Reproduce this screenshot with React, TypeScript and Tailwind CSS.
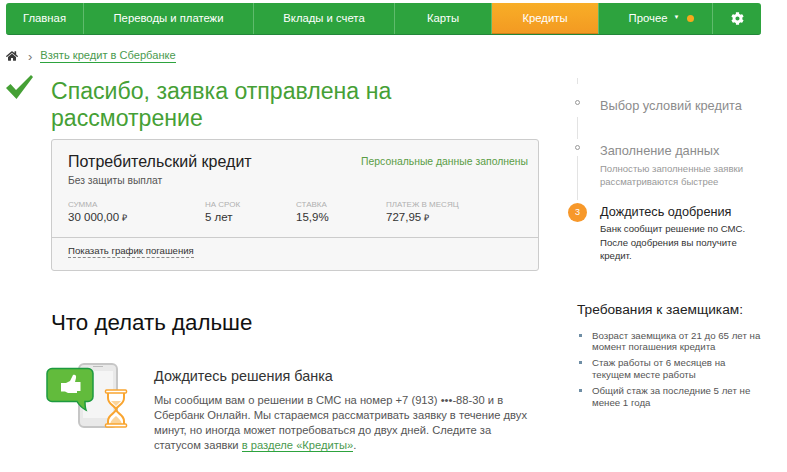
import { FaCog, FaHome } from "react-icons/fa";

const navItems = [
  { label: "Главная", w: "w-[78px]" },
  { label: "Переводы и платежи", w: "w-[170px]" },
  { label: "Вклады и счета", w: "w-[141px]" },
  { label: "Карты", w: "w-[97px]" },
];

const requirements = [
  "Возраст заемщика от 21 до 65 лет на момент погашения кредита",
  "Стаж работы от 6 месяцев на текущем месте работы",
  "Общий стаж за последние 5 лет не менее 1 года",
];

const terms = [
  { label: "СУММА", value: "30 000,00", rub: true, w: "w-[137px]" },
  { label: "НА СРОК", value: "5 лет", rub: false, w: "w-[91px]" },
  { label: "СТАВКА", value: "15,9%", rub: false, w: "w-[90px]" },
  { label: "ПЛАТЕЖ В МЕСЯЦ", value: "727,95", rub: true, w: "w-[130px]" },
];

function SmsIcon() {
  return (
    <svg width="84" height="68" viewBox="0 0 84 68" className="shrink-0">
      {/* phone */}
      <rect x="33" y="2" width="38" height="63" rx="5" fill="#e9e9e9" stroke="#c6c6c6" strokeWidth="2" />
      <rect x="37" y="9" width="30" height="47" fill="#f5f5f5" />
      <rect x="47" y="4" width="10" height="1" fill="#bbb" />
      {/* speech bubble */}
      <path
        d="M6 6.500h36a5 5 0 0 1 5 5v23a5 5 0 0 1-5 5h-3c0 3 0 6 1 8.500-4-2-7-5-9-8.500H6a5 5 0 0 1-5-5v-23a5 5 0 0 1 5-5z"
        fill="#62bb3c"
        stroke="#1d9a3f"
        strokeWidth="1.500"
      />
      {/* thumb */}
      <path
        d="M15 21h5l4-2 3-6c2.500-1 3.500 1 3 3l-1 4h5v9h-3v2h-9l-3-1.500h-4z"
        fill="#fff"
      />
      <rect x="32" y="20" width="2.500" height="9" fill="#fff" />
      {/* hourglass */}
      <path
        d="M62 30v6c0 7 7 7 8 11.500-1 4.500-8 5-8 11.500v5h16v-5c0-6.500-7-7-8-11.500 1-4.500 8-4.500 8-11.500v-6z"
        fill="#fff"
        stroke="#f9a530"
        strokeWidth="2"
      />
      <path d="M64 62c1-4 4-6 6-8 2 2 5 4 6 8z" fill="#fbd49a" />
      <path d="M65 39h10l-5 5z" fill="#fbd49a" />
      <rect x="59.500" y="28" width="21" height="3" rx="1" fill="#fff" stroke="#f9a530" strokeWidth="1.500" />
      <rect x="59.500" y="62" width="21" height="3" rx="1" fill="#fff" stroke="#f9a530" strokeWidth="1.500" />
    </svg>
  );
}

function StepDot() {
  return <div className="size-[5px] rounded-full border border-[#999] bg-white" />;
}

export default function App() {
  return (
    <div className="h-[472px] w-[787px] overflow-hidden bg-white pl-[6px] pt-[3px] font-['Liberation_Sans',Arial,sans-serif]">
      {/* top nav */}
      <nav className="flex h-[32px] w-[755px] overflow-hidden rounded-[3px] border-b border-[#23863a] bg-[#2da33e] text-[11.300px] text-white">
        {navItems.map((item) => (
          <div key={item.label} className={`${item.w} flex items-center justify-center border-r border-[#5fbb6c]`}>
            {item.label}
          </div>
        ))}
        <div className="flex w-[106px] items-center justify-center border-b border-[#d07f1c] bg-gradient-to-b from-[#f8ae27] to-[#f39a22]">
          Кредиты
        </div>
        <div className="flex w-[115px] items-center justify-center border-x border-[#5fbb6c] pl-[12px]">
          <span>Прочее</span>
          <span className="mb-[3px] ml-[6px] text-[6px]">▼</span>
          <span className="ml-[8px] size-[7px] rounded-full bg-[#f8a81c]" />
        </div>
        <div className="flex flex-1 items-center justify-center">
          <FaCog size={13} className="text-white" />
        </div>
      </nav>

      {/* breadcrumb */}
      <div className="mt-[14px] flex h-[14px] items-center text-[11.100px]">
        <FaHome size={12} className="text-[#3a3a3a]" />
        <span className="ml-[10px] mr-[8px] text-[13px] leading-none text-[#777]">›</span>
        <a className="border-b border-[#2da33e] leading-[13px] text-[#4a9a4e]">Взять кредит в Сбербанке</a>
      </div>

      <div className="mt-[15px] flex">
        {/* left column */}
        <div className="w-[533px] shrink-0">
          <div className="flex">
            <svg width="27" height="25" viewBox="0 0 27 25" className="-mt-[3px] shrink-0">
              <path d="M0 13 4.500 9 10 15 25 0 27 2 10.500 24z" fill="#45a035" />
            </svg>
            <h1 className="ml-[18px] w-[400px] text-[23.100px] leading-[27px] text-[#45a035]">
              Спасибо, заявка отправлена на рассмотрение
            </h1>
          </div>

          {/* credit card */}
          <div className="ml-[45px] mt-[7px] h-[132px] w-[488px] rounded-[3px] border border-[#ccc] bg-[#f7f7f7]">
            <div className="flex h-[98px] flex-col border-b border-[#ccc] pl-[16px] pr-[10px] pt-[12px]">
              <div className="flex items-center justify-between">
                <span className="text-[16px] leading-[20px] text-[#222]">Потребительский кредит</span>
                <span className="text-[10.400px] text-[#5a9d45]">Персональные данные заполнены</span>
              </div>
              <div className="mt-[1px] text-[10.300px] leading-[15px] text-[#555]">Без защиты выплат</div>
              <div className="mt-[11px] flex">
                {terms.map((t) => (
                  <div key={t.label} className={t.w}>
                    <div className="text-[8px] leading-[11px] text-[#b0b0b0]">{t.label}</div>
                    <div className="text-[11.500px] leading-[15px] text-[#333]">
                      {t.value}
                      {t.rub && <span className="ml-[3px] text-[9px]">₽</span>}
                    </div>
                  </div>
                ))}
              </div>
            </div>
            <div className="px-[16px] pt-[3px] leading-none">
              <span className="inline-block border-b border-dashed border-[#888] text-[9.600px] leading-[12px] text-[#333]">
                Показать график погашения
              </span>
            </div>
          </div>

          <h2 className="ml-[45px] mt-[39px] text-[22.300px] leading-[26px] text-[#111]">Что делать дальше</h2>

          <div className="mt-[26px] flex">
            <div className="ml-[40px]">
              <SmsIcon />
            </div>
            <div className="ml-[24px] w-[385px]">
              <div className="mt-[6px] text-[14.400px] leading-[17px] text-[#333]">Дождитесь решения банка</div>
              <p className="mt-[8px] text-[11.200px] leading-[15px] text-[#555]">
                Мы сообщим вам о решении в СМС на номер +7 (913) •••-88-30 и в
                <br />
                Сбербанк Онлайн. Мы стараемся рассматривать заявку в течение двух
                <br />
                минут, но иногда может потребоваться до двух дней. Следите за
                <br />
                статусом заявки <a className="border-b border-[#2da33e] text-[#4a9a4e]">в разделе «Кредиты»</a>.
              </p>
            </div>
          </div>
        </div>

        {/* right column */}
        <aside className="ml-[29px] w-[210px] shrink-0">
          <div className="relative mt-[20px] pl-[32px]">
            <div className="absolute left-[9px] top-[-20px] h-[122px] w-px bg-[#e3e3e3]" />
            <div className="relative h-[45px]">
              <div className="absolute left-[-25px] top-[-14px] bg-white pb-[12px] pt-[16px]">
                <StepDot />
              </div>
              <div className="text-[12.800px] leading-[16px] text-[#8c8c8c]">Выбор условий кредита</div>
            </div>
            <div className="relative h-[61px]">
              <div className="absolute left-[-25px] top-[-4px] bg-white py-[6px]">
                <StepDot />
              </div>
              <div className="text-[12.800px] leading-[16px] text-[#8c8c8c]">Заполнение данных</div>
              <div className="mt-[2.500px] text-[9.550px] leading-[13px] text-[#999]">
                Полностью заполненные заявки
                <br />
                рассматриваются быстрее
              </div>
            </div>
            <div className="relative">
              <div className="absolute left-[-32px] top-[-1px] flex size-[19px] items-center justify-center rounded-full bg-[#f7982a] text-[9px] text-white">
                3
              </div>
              <div className="text-[12.700px] leading-[16px] text-[#222]">Дождитесь одобрения</div>
              <div className="mt-[2px] text-[9.600px] leading-[13.500px] text-[#333]">
                Банк сообщит решение по СМС.
                <br />
                После одобрения вы получите
                <br />
                кредит.
              </div>
            </div>
          </div>

          <h3 className="ml-[9px] mt-[38px] text-[13.700px] leading-[17px] text-[#222]">Требования к заемщикам:</h3>
          <ul className="ml-[9px] mt-[12px] w-[187px] space-y-[5.400px]">
            {requirements.map((r) => (
              <li key={r} className="relative pl-[15px] text-[9.700px] leading-[11.300px] text-[#555]">
                <span className="absolute left-[2px] top-[4px] size-[3px] bg-[#6f8ea5]" />
                {r}
              </li>
            ))}
          </ul>
        </aside>
      </div>
    </div>
  );
}
